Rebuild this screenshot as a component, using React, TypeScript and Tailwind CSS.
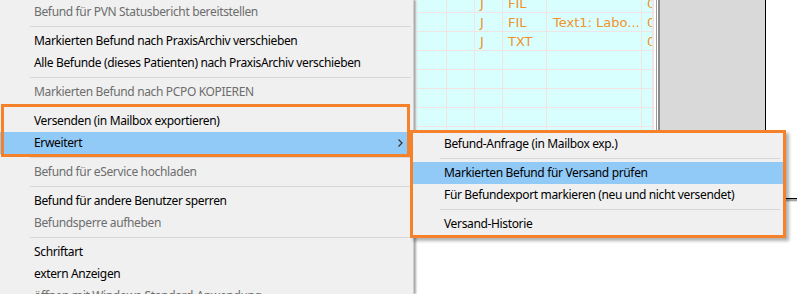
import React from "react";

type Entry = { label?: string; disabled?: boolean; active?: boolean; sub?: boolean; sep?: boolean };

const mainMenu: Entry[] = [
    { label: "Befund für PVN Statusbericht bereitstellen", disabled: true },
    { sep: true },
    { label: "Markierten Befund nach PraxisArchiv verschieben" },
    { label: "Alle Befunde (dieses Patienten) nach PraxisArchiv verschieben" },
    { sep: true },
    { label: "Markierten Befund nach PCPO KOPIEREN", disabled: true },
    { sep: true },
    { label: "Versenden (in Mailbox exportieren)" },
    { label: "Erweitert", active: true, sub: true },
    { sep: true },
    { label: "Befund für eService hochladen", disabled: true },
    { sep: true },
    { label: "Befund für andere Benutzer sperren" },
    { label: "Befundsperre aufheben", disabled: true },
    { sep: true },
    { label: "Schriftart" },
    { label: "extern Anzeigen" },
    { label: "öffnen mit Windows-Standard-Anwendung", disabled: true },
];

const subMenu: Entry[] = [
    { label: "Befund-Anfrage (in Mailbox exp.)" },
    { sep: true },
    { label: "Markierten Befund für Versand prüfen", active: true },
    { label: "Für Befundexport markieren (neu und nicht versendet)" },
    { sep: true },
    { label: "Versand-Historie" },
];

const rows = [
    ["", "", "J", "FIL", "", "0"],
    ["", "", "J", "FIL", "Text1: Labo...", "0"],
    ["", "", "J", "TXT", "", "0"],
    ["", "", "", "", "", ""],
    ["", "", "", "", "", ""],
    ["", "", "", "", "", ""],
    ["", "", "", "", "", ""],
    ["", "", "", "", "", ""],
    ["", "", "", "", "", ""],
    ["", "", "", "", "", ""],
    ["", "", "", "", "", ""],
];

const colW = ["w-[30px] pl-[5px]", "w-[28px] pl-[5px]", "w-[28px] pl-[5px]", "w-[44px] pl-[5px]", "w-[95px] pl-[6px]", "w-[11px] pl-[5px]"];

const Chevron = () => (
    <svg width="5" height="8" viewBox="0 0 5 8" className="mr-[8px]">
        <path d="M0.5 0.5 L4 4 L0.5 7.5" fill="none" stroke="#333" strokeWidth="1.2" />
    </svg>
);

const MenuList = ({ items, textPad, sepLeft, sepRight }: { items: Entry[]; textPad: string; sepLeft: string; sepRight: string }) => (
    <div className="flex flex-col tracking-[-0.35px]">
        {items.map((it, i) =>
            it.sep ? (
                <div key={i} className={`h-[7px] flex items-center ${sepLeft} ${sepRight}`}>
                    <div className="h-px w-full bg-[#d7d7d7]" />
                </div>
            ) : (
                <div
                    key={i}
                    className={`h-[22px] flex items-center justify-between whitespace-nowrap ${textPad} ${
                        it.active ? "bg-[#91c9f7]" : ""
                    } ${it.disabled ? "text-[#6d6d6d]" : "text-black"}`}
                >
                    <span>{it.label}</span>
                    {it.sub && <Chevron />}
                </div>
            )
        )}
    </div>
);

export default function App() {
    return (
        <div className="relative w-[797px] h-[294px] overflow-hidden bg-white flex text-[12px] font-['Noto_Sans',sans-serif]">
            {/* Kontextmenü */}
            <div className="w-[414px] h-full bg-[#f0f0f0] border-r border-[#cfcfcf] pt-px shrink-0 z-10 shadow-[2px_0_2px_rgba(0,0,0,0.35)]">
                <MenuList items={mainMenu} textPad="pl-[34px] pr-[2px]" sepLeft="ml-[30px]" sepRight="mr-[2px]" />
            </div>

            {/* Hintergrund: Tabelle */}
            <div className="flex items-start ml-[3px] shrink-0">
                <div className="w-[236px] h-[200px] bg-[#d8fffe] overflow-hidden -mt-[6px] text-[13px] font-['DejaVu_Sans',sans-serif] text-[#f2922c]">
                    {rows.map((r, i) => (
                        <div key={i} className="flex h-[19px] border-b border-[#f3e4e4]">
                            {r.map((c, j) => (
                                <div key={j} className={`${colW[j]} shrink-0 h-full border-r border-[#f3e4e4] leading-[19px] overflow-hidden whitespace-nowrap`}>
                                    {c}
                                </div>
                            ))}
                        </div>
                    ))}
                </div>
                <div className="w-[1px] h-[200px] bg-[#e8e8e8]" />
                <div className="w-[1px] h-[200px] bg-[#9a9a9a] ml-[2px]" />
                <div className="w-[108px] h-[130px] ml-[1px] bg-[#d9d9d9] border-l-2 border-[#8a8a8a] border-r border-r-black" />
                <div className="w-[30px] pt-[198px] ml-[20px]">
                    <div className="h-px bg-black" />
                    <div className="h-[3px] bg-[#a8a8a8] border-b border-[#e0e0e0]" />
                </div>
            </div>

            {/* Markierung Hauptmenü */}
            <div className="absolute left-[1px] top-[104px] w-[409px] h-[53px] border-[3px] border-[#f5812a] z-20" />

            {/* Untermenü Erweitert */}
            <div className="absolute left-[410px] top-[130px] w-[376px] h-[108px] bg-[#f0f0f0] border-[3px] border-[#f5812a] z-30 shadow-[3px_3px_3px_rgba(0,0,0,0.3)]">
                <MenuList items={subMenu} textPad="pl-[31px]" sepLeft="ml-[27px]" sepRight="mr-[3px]" />
            </div>
        </div>
    );
}
